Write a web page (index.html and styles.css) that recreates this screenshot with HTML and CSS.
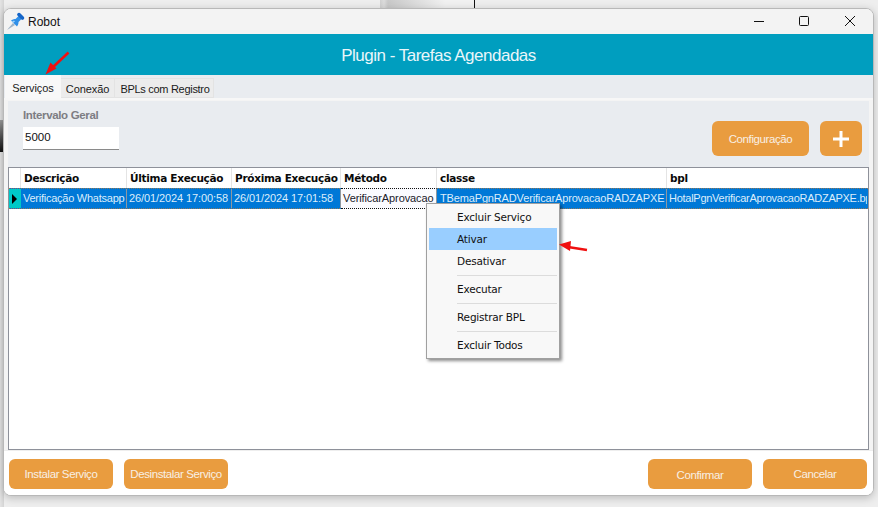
FILE: index.html
```html
<!DOCTYPE html>
<html lang="pt">
<head>
<meta charset="utf-8">
<title>Robot</title>
<link rel="stylesheet" href="styles.css">
</head>
<body>
<div class="desk-bar"></div>
<div class="desk-line"></div>
<div class="desk-dark"></div>
<main class="window">
  <header class="titlebar">
    <svg class="pin" width="20" height="20" viewBox="0 0 20 20"><path d="M1 19l6-7 2 2z" fill="#9fb4c8"/><path d="M5 9.500c2-1.500 3.500-1.500 4.500-1.500L13 4.500l3 3-3.500 3.500c0 1 0 2.500-1.500 4.500z" fill="#2f8fe8"/><path d="M11.500 2.500c1-1 2-1 3 0l3 3c1 1 1 2 0 3l-1.500.5-5-5z" fill="#1565c8"/><path d="M6 10.500l2-1 1 1-2 1.500z" fill="#9ed2fa"/></svg>
    <span class="app-name">Robot</span>
    <div class="win-controls">
      <svg width="14" height="14" viewBox="0 0 14 14"><path d="M2 7.500h10" stroke="#111" stroke-width="1"/></svg>
      <svg width="14" height="14" viewBox="0 0 14 14"><rect x="2.500" y="2.500" width="9" height="9" rx="1" fill="none" stroke="#111"/></svg>
      <svg width="14" height="14" viewBox="0 0 14 14"><path d="M2 2l10 10M12 2L2 12" stroke="#111"/></svg>
    </div>
  </header>
  <div class="banner">Plugin - Tarefas Agendadas</div>
  <nav class="tabs">
    <span class="tab active">Serviços</span>
    <span class="tab tab-conn">Conexão</span>
    <span class="tab tab-bpl">BPLs com Registro</span>
  </nav>
  <section class="page">
    <div class="panel">
      <div class="field">
        <label class="field-label">Intervalo Geral</label>
        <div class="input">5000</div>
      </div>
      <div class="top-actions">
        <button class="btn btn-config">Configuração</button>
        <button class="btn btn-plus"><svg width="18" height="18" viewBox="0 0 18 18"><path d="M9 1v16M1 9h16" stroke="#fff" stroke-width="3"/></svg></button>
      </div>
    </div>
    <div class="grid">
      <div class="row head">
        <div class="ind"></div>
        <div class="cell c1">Descrição</div>
        <div class="cell c2">Última Execução</div>
        <div class="cell c3">Próxima Execução</div>
        <div class="cell c4">Método</div>
        <div class="cell c5">classe</div>
        <div class="cell c6">bpl</div>
      </div>
      <div class="row sel">
        <div class="ind"><i class="tri"></i></div>
        <div class="cell c1">Verificação Whatsapp</div>
        <div class="cell c2">26/01/2024 17:00:58</div>
        <div class="cell c3">26/01/2024 17:01:58</div>
        <div class="cell c4 focus">VerificarAprovacao</div>
        <div class="cell c5">TBemaPgnRADVerificarAprovacaoRADZAPXE</div>
        <div class="cell c6">HotalPgnVerificarAprovacaoRADZAPXE.bpl</div>
      </div>
    </div>
    <footer class="actions">
      <button class="btn btn-foot">Instalar Serviço</button>
      <button class="btn btn-foot">Desinstalar Serviço</button>
      <span class="spacer"></span>
      <button class="btn btn-foot btn-low">Confirmar</button>
      <button class="btn btn-foot">Cancelar</button>
    </footer>
  </section>
</main>
<ul class="menu">
  <li>Excluir Serviço</li>
  <li class="hot">Ativar</li>
  <li>Desativar</li>
  <li class="sep"></li>
  <li>Executar</li>
  <li class="sep"></li>
  <li>Registrar BPL</li>
  <li class="sep"></li>
  <li>Excluir Todos</li>
</ul>
<svg class="arrow arrow-a" width="30" height="28" viewBox="0 0 30 28"><path d="M25.500 1.500L9 17" stroke="#f01010" stroke-width="2.500"/><path d="M2.500 23.500l5-12 6 6z" fill="#f01010"/></svg>
<svg class="arrow arrow-b" width="30" height="14" viewBox="0 0 30 14"><path d="M28 10L9 7" stroke="#f01010" stroke-width="2.500"/><path d="M0 4.500L12 1l-1 10z" fill="#f01010"/></svg>
</body>
</html>
```
FILE: styles.css
```css
* { box-sizing: border-box; }
html, body { margin: 0; height: 100%; }
body {
  width: 878px; height: 507px; overflow: hidden; position: relative;
  background: linear-gradient(90deg, #e4e4e4 0, #d4d4d4 4px, #eee 4px);
  font-family: "Liberation Sans", Arial, sans-serif; font-size: 11px; color: #111;
}
.desk-bar { position: absolute; left: 360px; top: 0; width: 115px; height: 8px; background: linear-gradient(90deg, #eee 0, #eee 20px, #d0d0d0 20px, #dcdcdc 24px, #c9c9c9 28px, #f1f1f1 85px, #f1f1f1 100%); }
.desk-line { position: absolute; left: 474px; top: 0; width: 1px; height: 8px; background: #111; }
.desk-dark { position: absolute; left: 0; top: 120px; width: 4px; height: 32px; background: linear-gradient(#999, #111); }
.window {
  position: absolute; left: 3px; top: 8px; width: 871px; height: 488px;
  display: flex; flex-direction: column;
  background: #fff; border: 1px solid #b8b8b8; border-radius: 8px; overflow: hidden;
  box-shadow: 0 2px 8px rgba(0,0,0,.22);
}
.titlebar { height: 25px; flex: none; display: flex; align-items: center; background: #f3f3f3; padding-left: 2px; }
.pin { flex: none; margin-top: -1px; }
.app-name { margin-left: 2px; font-size: 12px; color: #111; }
.win-controls { margin-left: auto; display: flex; gap: 31px; padding-right: 16px; margin-top: -2px; }
.win-controls svg { display: block; }
.win-controls svg:last-child { margin-left: 1px; }
.banner { height: 41px; flex: none; background: #009ebf; color: #e9f6fa; display: flex; align-items: center; justify-content: center; font-size: 17px; letter-spacing: -.5px; padding-top: 3px; }
.tabs { height: 23px; flex: none; display: flex; align-items: flex-end; background: #e9ecf0; padding-left: 1px; }
.tab { height: 20px; padding: 1px 0 0; display: flex; align-items: center; justify-content: center; white-space: nowrap; border: 1px solid #e3e3e3; border-left: 0; background: #ececec; color: #1a1a1a; letter-spacing: -.1px; }
.tab.active { height: 23px; width: 56px; background: #f8f8f8; border: 0; padding: 2px 0 0; }
.tab-conn { width: 54px; }
.tab-bpl { width: 99px; padding-left: 2px; letter-spacing: -.3px; }
.page { flex: 1; display: flex; flex-direction: column; background: #f4f4f4; border-top: 2px solid #f7f7f7; padding: 1px 4px 0; min-height: 0; }
.panel { height: 66px; flex: none; display: flex; background: #e9ecf0; padding: 7px 0 0 15px; justify-content: space-between; }
.field { width: 100px; }
.field-label { display: block; height: 16px; font-weight: 700; font-size: 11.500px; color: #7d7d83; letter-spacing: -.35px; line-height: 15px; }
.input { height: 23px; width: 96px; margin-top: 3px; background: #fff; border-bottom: 1px solid #8a8a8a; padding: 0 2px; line-height: 21px; font-size: 11.500px; color: #111; }
.top-actions { display: flex; gap: 11px; padding: 13px 7px 0 0; }
.btn { border: 0; background: #e99c3f; color: #f8efe4; font-family: "Liberation Sans", sans-serif; font-size: 11.500px; letter-spacing: -.4px; border-radius: 6px; padding: 0; display: flex; align-items: center; justify-content: center; }
.btn-config { width: 97px; height: 35px; }
.btn-plus { width: 42px; height: 35px; }
.grid { height: 283px; flex: none; background: #fff; border: 1px solid #8e919a; overflow: hidden; }
.row { display: flex; }
.head { height: 20px; }
.sel { height: 21px; background: #0078d7; color: #dcedfb; border-top: 1px dotted #90785a; border-bottom: 1px dotted #90785a; }
.ind { width: 12px; flex: none; border-right: 1px solid #e4e4e4; }
.sel .ind { background: #00c8c8; border-right: 0; display: flex; align-items: center; padding-left: 3px; }
.tri { display: block; width: 0; height: 0; border-left: 5px solid #000; border-top: 5px solid transparent; border-bottom: 5px solid transparent; }
.cell { flex: none; padding-left: 2px; white-space: nowrap; line-height: 19px; border-right: 1px solid #e4e4e4; }
.head .cell { font-family: "DejaVu Sans", sans-serif; font-weight: 700; font-size: 10.500px; color: #0a0a0a; line-height: 20px; letter-spacing: -.3px; padding-left: 3px; }
.sel .cell { border-right: 1px solid #8e97a0; letter-spacing: -.1px; }
.sel .c1 { letter-spacing: -.25px; }
.sel .c5 { letter-spacing: -.15px; padding-left: 3px; }
.c1 { width: 106px; }
.c2 { width: 105px; }
.c3 { width: 109px; }
.c4 { width: 96px; }
.c5 { width: 230px; }
.c6 { width: 200px; overflow: hidden; }
.head .c6, .sel .c6 { border-right: 0; }
.sel .c6 { letter-spacing: -.27px; }
.sel .cell.focus { background: #fbfbff; color: #20202a; height: 21px; margin: -1px 0; border-top: 1px dotted #111; border-bottom: 1px dotted #111; }
.actions { flex: 1; display: flex; align-items: flex-start; gap: 11px; margin: 0 -4px; padding: 8px 6px 0 5px; background: #fff; border-top: 1px solid #eee; }
.spacer { flex: 1; }
.btn-foot { width: 104px; height: 30px; }
.btn-low { padding-top: 2px; }
.menu {
  position: absolute; left: 426px; top: 203px; width: 134px; margin: 0; padding: 2px;
  list-style: none; background: #f8f8f8; border: 1px solid #a0a0a0;
  box-shadow: 2px 2px 3px rgba(0,0,0,.45);
  font-family: "DejaVu Sans", sans-serif; font-size: 10.500px; color: #111;
}
.menu li { height: 22px; line-height: 22px; padding-left: 28px; letter-spacing: -.2px; }
.menu .hot { background: #99ceff; }
.menu .sep { height: 6px; margin: 0 0 0 28px; padding: 0; background: linear-gradient(#dcdcdc, #dcdcdc) center/100% 1px no-repeat; }
.arrow { position: absolute; display: block; }
.arrow-a { left: 43px; top: 51px; }
.arrow-b { left: 559px; top: 240px; }
```
